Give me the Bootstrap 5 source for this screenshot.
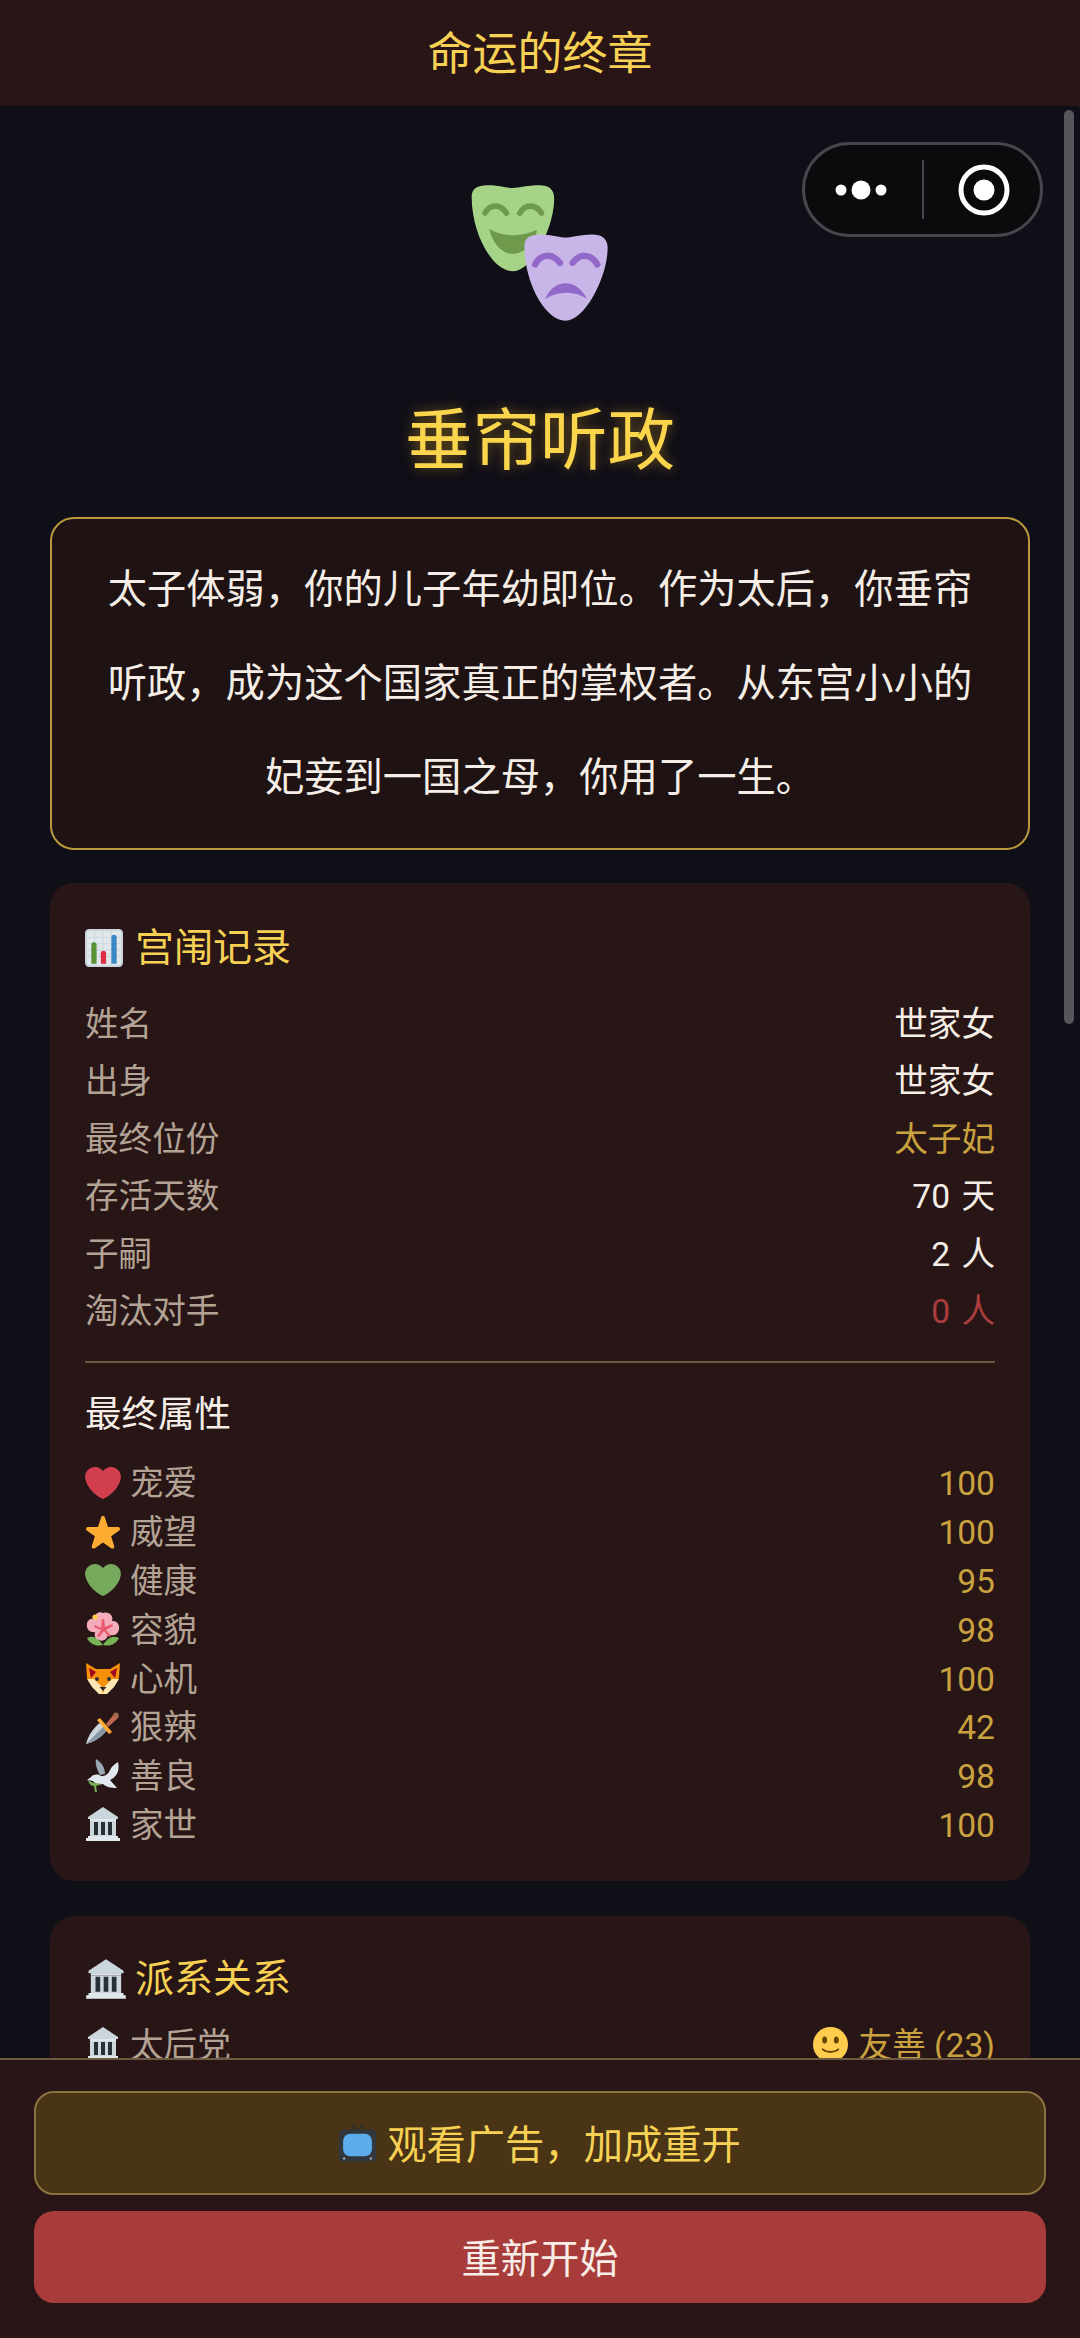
<!DOCTYPE html>
<html lang="zh-CN">
<head>
  <meta charset="UTF-8" />
  <meta name="viewport" content="width=device-width, initial-scale=1.0"/>
  <title>命运的终章</title>
  <link href="https://cdn.jsdelivr.net/npm/bootstrap@5.3.3/dist/css/bootstrap.min.css" rel="stylesheet" />
  <style>
    body {
      background-color: #100e17;
      font-family: Roboto, "Noto Sans CJK SC", "Noto Sans", sans-serif;
      height: 2338px;
      overflow: hidden;
    }

    .page-wrap { height: 2338px; }

    .top-bar {
      height: 106px;
      background: #291516;
      color: #f7d154;
      font-size: 45px;
      line-height: 109px;
    }

    .scroll-area { min-height: 0; padding: 76px 50px 0; }

    .scroll-thumb {
      position: absolute;
      top: 4px; right: 6px;
      width: 10px; height: 914px;
      border-radius: 5px;
      background: #55555c;
    }

    .capsule {
      position: absolute;
      top: 36px; right: 37px;
      width: 241px; height: 95px;
      border: 3px solid #46464c;
      border-radius: 48px;
      background: #0b0b0e;
    }

    .end-title {
      font-size: 67.500px;
      line-height: 90px;
      margin: 72px 0 31px;
      color: #fbd54c;
      text-shadow: 0 0 12px rgba(212, 160, 40, .5);
    }

    .story-box {
      background: #1f1212;
      border: 2px solid #b89a3e;
      border-radius: 24px;
      padding: 24px 48px 23px;
      color: #f5eee6;
      font-size: 39.300px;
      line-height: 94px;
      margin-bottom: 33px;
    }

    .panel {
      background: #281516;
      border-radius: 24px;
      padding: 36px 35px 30px;
      margin-bottom: 35px;
    }

    .panel-title {
      color: #f7d154;
      font-size: 39px;
      line-height: 58px;
      margin-bottom: 19px;
      gap: 12px;
    }
    .panel-title svg { width: 38px; height: 38px; }
    .panel-title.tight { gap: 8px; margin-top: -2px; margin-bottom: 14px; }
    .panel-title.tight svg { width: 42px; height: 42px; }

    .stat-row { font-size: 33.600px; line-height: 57.400px; color: #f5eee6; word-spacing: 3px; }
    .stat-name { color: #b3a394; }
    .val-gold { color: #c9a23f; }
    .val-red { color: #ab3d3d; }

    .split-line { height: 2px; background: #6d5540; margin: 21px 0 24px; }

    .sub-head { color: #f5eee6; font-size: 36.500px; line-height: 56px; margin-bottom: 17px; }

    .attr-row { font-size: 33.600px; line-height: 48.800px; color: #c9a23f; }
    .attr-name { color: #b3a394; gap: 9px; }
    .attr-name svg { width: 36px; height: 36px; margin-bottom: 4px; }
    .mood { gap: 11px; }
    .mood svg { width: 35px; height: 35px; margin-bottom: 4px; }

    .bottom-bar {
      background: #291516;
      border-top: 2px solid #6d5a42;
      padding: 31px 34px 35px;
      gap: 16px;
      z-index: 2;
    }

    .btn-ad, .btn-restart {
      width: 100%;
      border-radius: 20px;
      font-size: 39.300px;
      padding: 6px 0 0;
    }
    .btn-ad {
      height: 104px;
      background: #493416;
      border: 2px solid #8a7340;
      color: #f7d154;
      gap: 11px;
    }
    .btn-ad svg { width: 37px; height: 38px; margin-bottom: 6px; }
    .btn-restart {
      height: 92px;
      background: #a83c3a;
      border: 0;
      color: #f7ece6;
    }
  </style>
</head>
<body>

<!-- emoji drawn as symbols -->
<svg width="0" height="0" class="position-absolute">
  <symbol id="e-heart" viewBox="0 0 36 36"><path d="M35.885 11.833c0-5.45-4.418-9.868-9.867-9.868-3.308 0-6.227 1.633-8.018 4.129-1.791-2.496-4.71-4.129-8.017-4.129-5.45 0-9.868 4.417-9.868 9.868 0 .772.098 1.52.266 2.241C1.751 22.587 11.216 31.568 18 34.034c6.783-2.466 16.249-11.447 17.617-19.959.17-.721.268-1.469.268-2.242z"/></symbol>
  <symbol id="e-star" viewBox="0 0 36 36"><path fill="#ffac33" d="M27.287 34.627c-.404 0-.806-.124-1.152-.371L18 28.422l-8.135 5.834c-.693.496-1.623.496-2.312-.008-.689-.499-.979-1.385-.721-2.194l3.034-9.792-8.062-5.681c-.685-.505-.97-1.393-.708-2.203.264-.808 1.016-1.357 1.866-1.363L12.947 13l3.179-9.549c.268-.809 1.023-1.353 1.874-1.353.851 0 1.606.545 1.875 1.353L23 13l10.036.015c.853.006 1.606.556 1.867 1.363.263.81-.022 1.698-.708 2.203l-8.062 5.681 3.034 9.792c.26.809-.033 1.695-.72 2.194-.347.254-.753.379-1.16.379z"/></symbol>
  <symbol id="e-flower" viewBox="0 0 36 36">
    <path fill="#77b255" d="M2 27c6-3 11-1 16 7-7 2-13-1-16-7zM34 27c-6-3-11-1-16 7 7 2 13-1 16-7z"/>
    <path fill="#f4abba" d="M18 2c6-2 11 3 9 8 6-1 9 6 6 11-2 4-7 4-10 2 0 5-5 8-9 6-4-1-5-5-4-8-5 1-9-3-8-8 0-4 4-6 8-5C9 3 14 0 18 2z"/>
    <path fill="#ea596e" d="M17 8l2 0 1 8 7-3 1 2-7 4 5 6-2 1-5-6-5 6-2-1 4-6-7-3 1-2 6 3z"/>
    <circle fill="#ffcc4d" cx="10" cy="6" r="2.6"/>
  </symbol>
  <symbol id="e-fox" viewBox="0 0 36 36">
    <path fill="#f4900c" d="M1 3l10 6h14l10-6-1 15-6 9-7 7h-6l-7-7-6-9z"/>
    <path fill="#a0041e" d="M4 8l7 4-5 6zM32 8l-7 4 5 6z"/>
    <path fill="#ffe8b6" d="M2 19l7 0 7 7 2 8-4 0-7-7zM34 19l-7 0-7 7-2 8 4 0 7-7z"/>
    <circle fill="#292f33" cx="12" cy="19" r="1.9"/><circle fill="#292f33" cx="24" cy="19" r="1.9"/>
    <path fill="#292f33" d="M14.5 27h7L18 31z"/>
  </symbol>
  <symbol id="e-dagger" viewBox="0 0 36 36">
    <path fill="#ccd6dd" d="M1 35C3 27 8 19 16 13l7 7C17 28 9 33 1 35z"/>
    <path fill="#8899a6" d="M1 35L19.500 16.500l3.500 3.500C17 28 9 33 1 35z"/>
    <path fill="#ffac33" d="M12 11l3-2 12 14-3 2z"/>
    <path fill="#c1694f" d="M21 15l8-10c2-2 6 1 4 4L23 18z"/>
    <circle cx="31" cy="6" r="2.600" fill="#a0674f"/>
  </symbol>
  <symbol id="e-dove" viewBox="0 0 36 36">
    <path fill="#99aab5" d="M11 1c5 3 9 8 9 15l-5 1C12 12 10 6 11 1z"/>
    <path fill="#e1e8ed" d="M33 4c2 8-1 15-8 18l7 8c-6 0-11-1-14-4-4 1-8 0-10-3l-6-1 4-3c3-3 7-3 10-1 5 0 7-2 9-6 2-4 5-6 8-8z"/>
    <path fill="#77b255" d="M3 22c4 3 8 4 13 3-2 2-4 3-5 3l1 6-2 0-1-6c-3 0-5-2-6-6z"/>
  </symbol>
  <symbol id="e-bank" viewBox="0 0 36 36">
    <path fill="#ccd6dd" d="M18 1L3 11v2h30v-2z"/>
    <path fill="#e1e8ed" d="M5 13h26v2H5z"/>
    <path fill="#ccd6dd" d="M5 15h26v15H5z"/>
    <path fill="#292f33" d="M9 16h4v13H9zM16 16h4v13h-4zM23 16h4v13h-4z"/>
    <path fill="#e1e8ed" d="M3 30h30v2H3zM1 32h34v3H1z"/>
  </symbol>
  <symbol id="e-chart" viewBox="0 0 36 36">
    <rect width="36" height="36" rx="4" fill="#ccd6dd"/>
    <rect x="2" y="2" width="32" height="32" rx="2" fill="#e1e8ed"/>
    <path fill="none" stroke="#ccd6dd" d="M2 8h32M2 14h32M2 20h32M2 26h32M9 2v32M17 2v32M25 2v32"/>
    <path fill="#5c913b" d="M6 15a2.500 2.500 0 0 1 5 0v18H6z"/>
    <path fill="#dd2e44" d="M15 23a2.500 2.500 0 0 1 5 0v10h-5z"/>
    <path fill="#3b88c3" d="M25 8a2.500 2.500 0 0 1 5 0v25h-5z"/>
  </symbol>
  <symbol id="e-tv" viewBox="0 0 36 36">
    <path stroke="#292f33" stroke-width="1.600" d="M18 6L13 1M18 6l5-5"/>
    <rect y="5" width="36" height="31" rx="4" fill="#31373d"/>
    <rect x="4" y="9" width="28" height="22" rx="7" fill="#5dadec"/>
    <circle cx="5" cy="33" r="1.200" fill="#99aab5"/><circle cx="31" cy="33" r="1.200" fill="#99aab5"/>
  </symbol>
  <symbol id="e-smile" viewBox="0 0 36 36">
    <circle cx="18" cy="18" r="18" fill="#ffcc4d"/>
    <ellipse cx="12" cy="13.500" rx="2.500" ry="3.600" fill="#664500"/>
    <ellipse cx="24" cy="13.500" rx="2.500" ry="3.600" fill="#664500"/>
    <path fill="none" stroke="#664500" stroke-width="2" stroke-linecap="round" d="M10 23c4 3.500 12 3.500 16 0"/>
  </symbol>
</svg>

<div class="page-wrap d-flex flex-column">
  <div class="top-bar text-center flex-shrink-0">命运的终章</div>

  <div class="position-relative flex-grow-1 overflow-hidden">
    <div class="scroll-thumb"></div>

    <!-- capsule of the mini program -->
    <div class="capsule">
      <svg width="235" height="89" viewBox="805 145 235 89">
        <circle cx="841" cy="190" r="5.500" fill="#fff"/>
        <circle cx="861" cy="190" r="9.500" fill="#fff"/>
        <circle cx="881" cy="190" r="5.500" fill="#fff"/>
        <path d="M923 160v59" stroke="#46464c" stroke-width="2"/>
        <circle cx="984" cy="190" r="23" fill="none" stroke="#fff" stroke-width="5"/>
        <circle cx="984" cy="190" r="10.500" fill="#fff"/>
      </svg>
    </div>

    <div class="scroll-area">
      <div class="text-center lh-1">
        <svg width="142" height="142" viewBox="210 125 425 425">
          <path fill="#a6d388" d="M218 170C218 145 235 135 265 135C300 135 320 143 341 143C362 143 385 135 420 135C450 135 465 148 465 175C465 260 400 392 341 392C280 392 218 280 218 170Z"/>
          <g fill="none" stroke="#6f9a4c" stroke-width="17" stroke-linecap="round">
            <path d="M258 218C272 190 305 190 322 218"/>
            <path d="M362 218C378 190 410 190 427 218"/>
          </g>
          <path fill="#6f9a4c" d="M270 265C310 290 370 290 413 268C410 310 375 340 340 340C305 340 280 305 270 265Z"/>
          <path fill="#c9b6e8" d="M376 317C376 292 393 282 423 282C458 282 478 291 499 291C520 291 543 282 578 282C608 282 625 295 625 322C625 407 558 540 499 540C438 540 376 427 376 317Z"/>
          <g fill="none" stroke="#9268c8" stroke-width="19" stroke-linecap="round">
            <path d="M408 372C425 338 460 338 482 367"/>
            <path d="M520 367C542 338 575 338 594 372"/>
          </g>
          <path fill="#9268c8" d="M438 475C462 412 535 412 563 475C530 450 475 450 438 475Z"/>
        </svg>
      </div>

      <h1 class="end-title text-center fw-normal">垂帘听政</h1>

      <div class="story-box text-center">太子体弱，你的儿子年幼即位。作为太后，你垂帘听政，成为这个国家真正的掌权者。从东宫小小的妃妾到一国之母，你用了一生。</div>

      <div class="panel">
        <div class="panel-title d-flex align-items-center">
          <svg><use href="#e-chart"/></svg>宫闱记录
        </div>
        <div class="stat-row d-flex justify-content-between"><span class="stat-name">姓名</span><span>世家女</span></div>
        <div class="stat-row d-flex justify-content-between"><span class="stat-name">出身</span><span>世家女</span></div>
        <div class="stat-row d-flex justify-content-between"><span class="stat-name">最终位份</span><span class="val-gold">太子妃</span></div>
        <div class="stat-row d-flex justify-content-between"><span class="stat-name">存活天数</span><span>70 天</span></div>
        <div class="stat-row d-flex justify-content-between"><span class="stat-name">子嗣</span><span>2 人</span></div>
        <div class="stat-row d-flex justify-content-between"><span class="stat-name">淘汰对手</span><span class="val-red">0 人</span></div>

        <div class="split-line"></div>
        <div class="sub-head">最终属性</div>

        <div class="attr-row d-flex justify-content-between"><span class="attr-name d-flex align-items-center"><svg fill="#d13f4e"><use href="#e-heart"/></svg>宠爱</span><span>100</span></div>
        <div class="attr-row d-flex justify-content-between"><span class="attr-name d-flex align-items-center"><svg><use href="#e-star"/></svg>威望</span><span>100</span></div>
        <div class="attr-row d-flex justify-content-between"><span class="attr-name d-flex align-items-center"><svg fill="#77a95c"><use href="#e-heart"/></svg>健康</span><span>95</span></div>
        <div class="attr-row d-flex justify-content-between"><span class="attr-name d-flex align-items-center"><svg><use href="#e-flower"/></svg>容貌</span><span>98</span></div>
        <div class="attr-row d-flex justify-content-between"><span class="attr-name d-flex align-items-center"><svg><use href="#e-fox"/></svg>心机</span><span>100</span></div>
        <div class="attr-row d-flex justify-content-between"><span class="attr-name d-flex align-items-center"><svg><use href="#e-dagger"/></svg>狠辣</span><span>42</span></div>
        <div class="attr-row d-flex justify-content-between"><span class="attr-name d-flex align-items-center"><svg><use href="#e-dove"/></svg>善良</span><span>98</span></div>
        <div class="attr-row d-flex justify-content-between"><span class="attr-name d-flex align-items-center"><svg><use href="#e-bank"/></svg>家世</span><span>100</span></div>
      </div>

      <div class="panel">
        <div class="panel-title tight d-flex align-items-center">
          <svg><use href="#e-bank"/></svg>派系关系
        </div>
        <div class="attr-row d-flex justify-content-between">
          <span class="attr-name d-flex align-items-center"><svg><use href="#e-bank"/></svg>太后党</span>
          <span class="mood d-flex align-items-center"><svg><use href="#e-smile"/></svg>友善 (23)</span>
        </div>
      </div>
    </div>
  </div>

  <div class="bottom-bar d-flex flex-column flex-shrink-0">
    <button type="button" class="btn btn-ad d-flex align-items-center justify-content-center"><svg><use href="#e-tv"/></svg>观看广告，加成重开</button>
    <button type="button" class="btn btn-restart">重新开始</button>
  </div>
</div>

<script src="https://cdn.jsdelivr.net/npm/bootstrap@5.3.3/dist/js/bootstrap.bundle.min.js"></script>
</body>
</html>
